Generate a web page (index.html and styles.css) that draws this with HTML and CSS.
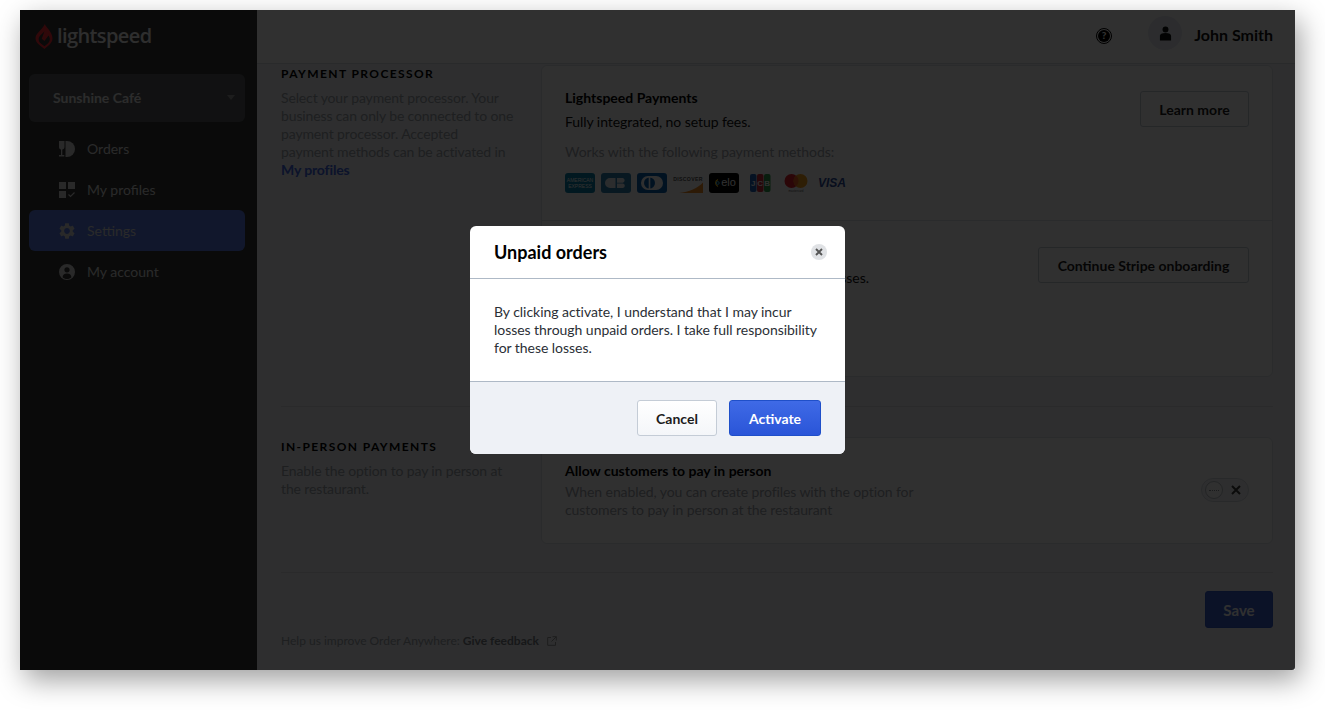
FILE: index.html
```html
<!DOCTYPE html>
<html lang="en">
<head>
  <meta charset="UTF-8">
  <title>Order Anywhere Settings</title>
  <link rel="stylesheet" href="styles.css">
</head>
<body>
  <div class="app">
    <aside class="sidebar">
      <div class="logo">
        <svg class="logo-mark" viewBox="0 0 20 28" width="18" height="25"><path fill-rule="evenodd" d="M11 0c.5 3 8.500 9 8.500 16 0 3-1.400 5.400-3.500 7.200L10.500 28l-6-4.800C2 21.300.5 18.800.5 16c0-5.500 7-9 10.500-16zM10.500 8C8 11.500 4 13 4 17c0 2 1 3.600 2.500 4.800l4 3.200 3.500-3c1.500-1.200 2.500-3 2.500-5 0-1.500-.6-3-1.500-4.200L10.500 19 7.500 16.500z" fill="#ff2f36"/></svg>
        <span class="logo-text">lightspeed</span>
      </div>
      <div class="store-select">
        <span>Sunshine Café</span>
        <span class="caret"></span>
      </div>
      <nav class="nav">
        <a class="nav-item">
          <svg viewBox="0 0 16 16" width="16" height="16"><path d="M8 0a8 8 0 0 1 0 16H6.500V0z" fill="#d8d8d8"/><path d="M0 0h5.500v6c0 1.400-1 2.300-2.200 2.500V14h2v1.500H0V14h2V8.500C.8 8.300 0 7.400 0 6z" fill="#d8d8d8"/></svg>
          <span>Orders</span>
        </a>
        <a class="nav-item">
          <svg viewBox="0 0 16 16" width="16" height="16"><path d="M0 0h7v7H0zM9 0h7v7H9zM0 9h7v7H0z" fill="#d8d8d8"/><path d="M9.500 12.500l2 2 4-4" fill="none" stroke="#d8d8d8" stroke-width="1.200"/></svg>
          <span>My profiles</span>
        </a>
        <a class="nav-item active">
          <svg viewBox="2 2 20 20" width="16" height="16"><path d="M19.140 12.940c.04-.3.06-.61.06-.94 0-.32-.02-.64-.07-.94l2.030-1.580c.18-.14.23-.41.12-.61l-1.920-3.320c-.12-.22-.37-.29-.59-.22l-2.390.96c-.5-.38-1.030-.7-1.620-.94l-.36-2.540c-.04-.24-.24-.41-.48-.41h-3.840c-.24 0-.43.17-.47.41l-.36 2.540c-.59.24-1.130.57-1.620.94l-2.390-.96c-.22-.08-.47 0-.59.22L2.740 8.870c-.12.21-.08.47.12.61l2.030 1.580c-.05.3-.09.63-.09.94s.02.64.07.94l-2.030 1.580c-.18.14-.23.41-.12.61l1.920 3.320c.12.22.37.29.59.22l2.390-.96c.5.38 1.030.7 1.620.94l.36 2.540c.05.24.24.41.48.41h3.840c.24 0 .44-.17.47-.41l.36-2.540c.59-.24 1.130-.56 1.620-.94l2.390.96c.22.08.47 0 .59-.22l1.920-3.320c.12-.22.07-.47-.12-.61l-2.010-1.580zM12 15.600c-1.980 0-3.600-1.620-3.600-3.600s1.620-3.600 3.600-3.600 3.600 1.620 3.600 3.600-1.620 3.600-3.600 3.600z" fill="#d8d8d8"/></svg>
          <span>Settings</span>
        </a>
        <a class="nav-item">
          <svg viewBox="0 0 16 16" width="16" height="16"><path fill-rule="evenodd" d="M8 0a8 8 0 1 1 0 16A8 8 0 0 1 8 0zm0 3.200a2.600 2.600 0 1 0 0 5.200 2.600 2.600 0 0 0 0-5.200zM3.600 13.200C4.500 14.400 6.200 15 8 15s3.500-.6 4.400-1.800c0-2.200-1.600-3.800-4.400-3.800s-4.400 1.600-4.400 3.800z" fill="#d8d8d8"/></svg>
          <span>My account</span>
        </a>
      </nav>
    </aside>

    <main class="main">
      <header class="topbar">
        <svg class="help" viewBox="0 0 16 16" width="16" height="16"><circle cx="8" cy="8" r="7.500" fill="none" stroke="#000" stroke-width="1"/><circle cx="8" cy="8" r="6" fill="#000"/><text x="8" y="11" text-anchor="middle" class="help-mark">?</text></svg>
        <div class="avatar">
          <svg viewBox="0 0 14 16" width="13" height="15"><circle cx="7" cy="3.600" r="3.200" fill="#111"/><path d="M1 15.500V10.500C1 8.700 3 7.500 7 7.500s6 1.200 6 3v5z" fill="#111"/></svg>
        </div>
        <span class="user-name">John Smith</span>
      </header>

      <div class="content">
        <section class="section">
          <div class="section-info">
            <h2>Payment processor</h2>
            <p>Select your payment processor. Your business can only be connected to one payment processor. Accepted<br>payment methods can be activated in<br><a class="link">My profiles</a></p>
          </div>
          <div class="card">
            <div class="card-row">
              <div class="row-text">
                <h3>Lightspeed Payments</h3>
                <p class="dark">Fully integrated, no setup fees.</p>
                <p class="muted gap">Works with the following payment methods:</p>
                <div class="pay-icons">
                  <svg viewBox="0 0 30 20" width="30" height="20"><rect width="30" height="20" rx="3" fill="#0a7fa8"/><text x="15" y="9" class="pay-tiny">AMERICAN</text><text x="15" y="15" class="pay-tiny">EXPRESS</text></svg>
                  <svg viewBox="0 0 30 20" width="30" height="20"><rect width="30" height="20" rx="3" fill="#2a7fb0"/><path d="M14.500 5H9a5 5 0 0 0 0 10h5.500zM16 5h6a2.500 2.500 0 0 1 0 4.700h-6zM16 10.500h6a2.300 2.300 0 0 1 0 4.500h-6z" fill="#e8eef2"/></svg>
                  <svg viewBox="0 0 30 20" width="30" height="20"><rect width="30" height="20" rx="3" fill="#0a62b0"/><rect x="4" y="3" width="22" height="14" rx="7" fill="#fff"/><circle cx="12.500" cy="10" r="5.500" fill="#0a62b0"/><rect x="11.700" y="4" width="1.600" height="12" fill="#fff"/></svg>
                  <svg viewBox="0 0 30 20" width="30" height="20"><text x="15" y="7.500" class="pay-disc">DISCOVER</text><path d="M30 9.500V20H6C16 19 25 15 30 9.500z" fill="#f08a24"/></svg>
                  <svg viewBox="0 0 30 20" width="30" height="20"><rect width="30" height="20" rx="3" fill="#000"/><path d="M9 6.500a3.800 3.800 0 0 0 0 7" fill="none" stroke="#f7c21b" stroke-width="1.300"/><circle cx="8.800" cy="10" r="1.400" fill="none" stroke="#39b5e8" stroke-width="1"/><text x="19.500" y="13" class="pay-elo">elo</text></svg>
                  <svg viewBox="0 0 30 20" width="30" height="20"><rect x="5" y="1" width="6.500" height="18" rx="2" fill="#1d63b8"/><rect x="12" y="1" width="6.500" height="18" rx="2" fill="#cf2a3a"/><rect x="19" y="1" width="6.500" height="18" rx="2" fill="#2a9a4a"/><text x="8.300" y="12.500" class="pay-jcb">J</text><text x="15.200" y="12.500" class="pay-jcb">C</text><text x="22.200" y="12.500" class="pay-jcb">B</text></svg>
                  <svg viewBox="0 0 30 20" width="30" height="20"><circle cx="10.500" cy="8" r="7" fill="#e2202c"/><circle cx="19.500" cy="8" r="7" fill="#f59d1f"/><path d="M15 2.600a7 7 0 0 1 0 10.800 7 7 0 0 1 0-10.800z" fill="#f26122"/><text x="15" y="18.700" class="pay-mc">mastercard</text></svg>
                  <svg viewBox="0 0 30 20" width="30" height="20"><text x="15" y="14" class="pay-visa">VISA</text></svg>
                </div>
              </div>
              <button class="btn learn">Learn more</button>
            </div>
            <div class="card-row second">
              <div class="row-text">
                <p class="dark">Stripe fees apply. You may incur all of these losses.</p>
              </div>
              <button class="btn onboard">Continue Stripe onboarding</button>
            </div>
          </div>
        </section>

        <hr class="rule">

        <section class="section lower">
          <div class="section-info">
            <h2>In-person payments</h2>
            <p>Enable the option to pay in person at the restaurant.</p>
          </div>
          <div class="card">
            <div class="card-row toggle-row">
              <div class="row-text narrow">
                <h3>Allow customers to pay in person</h3>
                <p class="muted">When enabled, you can create profiles with the option for customers to pay in person at the restaurant</p>
              </div>
              <div class="toggle">
                <span class="knob"><span class="knob-dots"></span></span>
                <svg viewBox="0 0 10 10" width="10" height="10"><path d="M1 1l8 8M9 1l-8 8" stroke="#3a3a3a" stroke-width="2"/></svg>
              </div>
            </div>
          </div>
        </section>

        <hr class="rule last">

        <div class="save-row">
          <button class="btn primary save">Save</button>
        </div>

        <footer class="feedback">
          <span>Help us improve Order Anywhere: <strong>Give feedback</strong></span>
          <svg viewBox="0 0 10 10" width="10" height="10"><path d="M4 1.500H.7v7.800h7.800V6M5.500.7h3.800v3.800M9.300.7L4.500 5.500" fill="none" stroke="#9a9a9a" stroke-width="1"/></svg>
        </footer>
      </div>
    </main>

    <div class="overlay">
      <div class="modal">
        <div class="modal-head">
          <h1>Unpaid orders</h1>
          <span class="modal-close">
            <svg viewBox="0 0 8 8" width="8" height="8"><path d="M1 1l6 6M7 1L1 7" stroke="#555" stroke-width="1.900"/></svg>
          </span>
        </div>
        <div class="modal-body">
          By clicking activate, I understand that I may incur losses through unpaid orders. I take full responsibility for these losses.
        </div>
        <div class="modal-foot">
          <button class="btn cancel">Cancel</button>
          <button class="btn primary">Activate</button>
        </div>
      </div>
    </div>
  </div>
</body>
</html>
```

FILE: styles.css
```css
* {
  box-sizing: border-box;
}

html, body {
  height: 100%;
}

body {
  margin: 0;
  padding: 10px 30px 40px 20px;
  background: #fff;
  font-family: "Lato", sans-serif;
  overflow: hidden;
}

.app {
  position: relative;
  display: flex;
  height: 660px;
  border-radius: 0 0 3px 0;
  box-shadow: 5px 10px 28px rgba(0, 0, 0, 0.38);
}

/* Sidebar */
.sidebar {
  width: 237px;
  flex-shrink: 0;
  padding: 0 12px 0 9px;
  background: #353636;
  color: #dcdcdc;
}

.logo {
  display: flex;
  align-items: center;
  gap: 4px;
  height: 52px;
  padding-left: 6px;
}

.logo-text {
  font-family: "Open Sans", sans-serif;
  font-size: 20px;
  font-weight: 600;
  letter-spacing: -0.6px;
  color: #f2f2f2;
  padding-bottom: 2px;
}

.store-select {
  display: flex;
  align-items: center;
  justify-content: space-between;
  height: 48px;
  margin: 12px 0 6px;
  padding: 0 10px 2px 24px;
  border-radius: 6px;
  background: #5a5e60;
  font-size: 14px;
  font-weight: 700;
  color: #e6e6e6;
}

.caret {
  width: 0;
  height: 0;
  border-left: 4px solid transparent;
  border-right: 4px solid transparent;
  border-top: 5px solid #9a9a9a;
}

.nav {
  display: flex;
  flex-direction: column;
}

.nav-item {
  display: flex;
  align-items: center;
  gap: 12px;
  height: 41px;
  padding-left: 30px;
  border-radius: 6px;
  font-size: 14px;
}

.nav-item.active {
  background: #5a7be6;
}

/* Main column */
.main {
  flex: 1;
  display: flex;
  flex-direction: column;
  min-width: 0;
  overflow: hidden;
  background: #f2f5f9;
}

.topbar {
  display: flex;
  align-items: center;
  justify-content: flex-end;
  flex-shrink: 0;
  height: 54px;
  padding: 0 22px 4px 0;
  background: #fff;
  border-bottom: 1px solid #d8dce2;
}

.help {
  margin: 3px 36px 0 0;
}

.help-mark {
  font-size: 10px;
  font-weight: 900;
  fill: #fff;
  font-family: "Lato", sans-serif;
}

.avatar {
  display: flex;
  align-items: center;
  justify-content: center;
  width: 34px;
  height: 34px;
  margin: 0 12px 3px 0;
  border-radius: 50%;
  background: #e6ebf2;
}

.user-name {
  font-size: 16px;
  font-weight: 700;
  color: #111;
}

.content {
  padding: 1px 22px 0 24px;
}

.section {
  display: flex;
  gap: 20px;
}

.section-info {
  width: 240px;
  flex-shrink: 0;
  padding-top: 1px;
}

.lower .section-info {
  padding-top: 2px;
}

.section-info h2 {
  margin: 0 0 8px;
  font-size: 12px;
  line-height: 15px;
  font-weight: 700;
  letter-spacing: 1.4px;
  text-transform: uppercase;
  color: #000;
}

.section-info p {
  width: 233px;
  margin: 0;
  font-size: 14px;
  line-height: 18px;
  letter-spacing: -0.13px;
  color: #a0a4ab;
}

.link {
  font-weight: 700;
  color: #3f66e3;
}

.card {
  flex: 1;
  background: #fff;
  border: 1px solid #dfe3e8;
  border-radius: 6px;
}

.card-row {
  display: flex;
  justify-content: space-between;
  align-items: flex-start;
  min-height: 154px;
  padding: 23px 23px 27px 23px;
}

.card-row.second {
  min-height: 156px;
  padding-top: 48px;
  border-top: 1px solid #dfe3e8;
}

.card-row h3 {
  margin: 0 0 6px;
  font-size: 14px;
  line-height: 18px;
  font-weight: 700;
  color: #000;
}

.card-row p {
  margin: 0;
  font-size: 14px;
  line-height: 18px;
  letter-spacing: -0.07px;
}

.dark {
  color: #111;
}

.muted {
  color: #a0a4ab;
}

.card-row .gap {
  margin-top: 12px;
}

.pay-icons {
  display: flex;
  gap: 6px;
  margin-top: 12px;
}

.pay-tiny, .pay-disc, .pay-elo, .pay-jcb, .pay-mc, .pay-visa {
  font-family: "Liberation Sans", sans-serif;
  text-anchor: middle;
}

.pay-tiny {
  font-size: 5px;
  fill: #fff;
}

.pay-disc {
  font-size: 5.200px;
  font-weight: 700;
  letter-spacing: 0.3px;
  fill: #555;
}

.pay-elo {
  font-size: 11px;
  fill: #fff;
}

.pay-jcb {
  font-size: 8px;
  font-weight: 700;
  fill: #fff;
}

.pay-mc {
  font-size: 3px;
  fill: #555;
}

.pay-visa {
  font-size: 12px;
  font-weight: 700;
  font-style: italic;
  fill: #2a4a9a;
}

.btn {
  height: 36px;
  padding: 0;
  border: 1px solid #c4ccd6;
  border-radius: 3px;
  background: #fff;
  font-family: "Lato", sans-serif;
  font-size: 14px;
  font-weight: 700;
  color: #1c1c1c;
}

.btn.primary {
  border-color: #1f4fc9;
  background: linear-gradient(#3f6ae6, #2a55d8);
  color: #fff;
}

.learn {
  width: 109px;
  margin-top: 2px;
}

.onboard {
  width: 211px;
  margin-top: -22px;
}

.toggle-row {
  min-height: 105px;
  padding: 24px 23px 0;
}

.toggle-row h3 {
  margin-bottom: 3px;
}

.toggle-row p {
  letter-spacing: -0.09px;
}

.narrow {
  width: 360px;
}

.toggle {
  display: flex;
  align-items: center;
  justify-content: space-between;
  width: 48px;
  height: 24px;
  margin-top: 16px;
  padding: 0 7px 0 3px;
  border: 1px solid #d6dae0;
  border-radius: 12px;
  background: #f4f5f7;
}

.knob {
  display: flex;
  align-items: center;
  justify-content: center;
  width: 18px;
  height: 18px;
  border: 1px solid #b8bdc4;
  border-radius: 50%;
  background: #fff;
}

.knob-dots {
  width: 10px;
  border-top: 1px dotted #8a8f96;
}

.rule {
  height: 1px;
  margin: 29px 0 30px;
  border: 0;
  background: #dcdfe4;
}

.rule.last {
  margin: 28px 0 18px;
}

.save-row {
  display: flex;
  justify-content: flex-end;
}

.btn.save {
  width: 68px;
  height: 37px;
  border-color: #3359c8;
  background: #3b5fd0;
  font-size: 15px;
}

.feedback {
  display: flex;
  align-items: center;
  margin-top: 5px;
  font-size: 12px;
  line-height: 16px;
  color: #a0a4ab;
}

.feedback strong {
  color: #7a7e85;
}

.feedback svg {
  margin-left: 8px;
}

/* Modal */
.overlay {
  position: absolute;
  inset: 0;
  display: flex;
  align-items: center;
  justify-content: center;
  background: rgba(0, 0, 0, 0.81);
  border-radius: 0 0 3px 0;
}

.modal {
  width: 375px;
  overflow: hidden;
  border-radius: 6px;
  background: #fff;
}

.modal-head {
  display: flex;
  align-items: center;
  justify-content: space-between;
  height: 53px;
  padding: 0 18px 0 24px;
  border-bottom: 1px solid #aeb9c6;
}

.modal-head h1 {
  margin: 0;
  font-size: 18px;
  font-weight: 700;
  color: #000;
}

.modal-close {
  display: flex;
  align-items: center;
  justify-content: center;
  width: 16px;
  height: 16px;
  border-radius: 50%;
  background: #e0e2e5;
}

.modal-body {
  padding: 24px;
  font-size: 14px;
  line-height: 18px;
  letter-spacing: -0.04px;
  color: #2b2f36;
}

.modal-foot {
  display: flex;
  justify-content: flex-end;
  gap: 12px;
  height: 73px;
  padding: 18px 24px 0;
  border-top: 1px solid #aeb9c6;
  background: #eef1f6;
}

.cancel {
  width: 80px;
  background: linear-gradient(#fff, #f4f6f9);
}

.modal-foot .primary {
  width: 92px;
}
```
